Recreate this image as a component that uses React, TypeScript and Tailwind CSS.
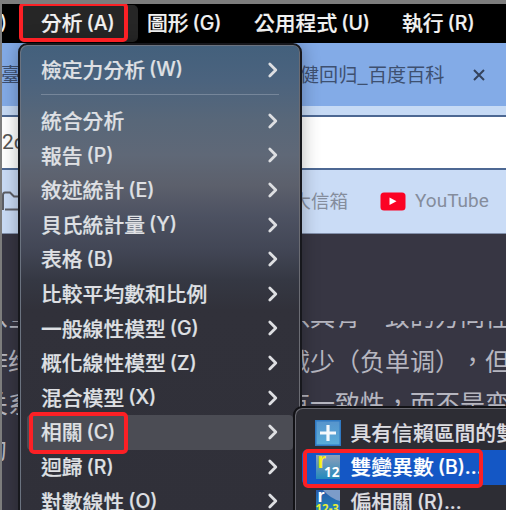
import React from "react";

const CJK = "font-['Noto_Sans_CJK_TC','Noto_Sans_CJK_SC',sans-serif]";
const LATIN = "font-['Inter','Noto_Sans_CJK_TC',sans-serif]";

function Label({ text, hint }: { text: string; hint?: string }) {
  return (
    <span
      className={`${CJK} flex shrink-0 items-center pb-[1px] whitespace-nowrap text-[20.8px] leading-[32.6px] font-medium [-webkit-text-stroke:0.2px_currentColor]`}
    >
      <span>{text}</span>
      {hint && <span className={`${LATIN} mt-[1px] ml-[4px] text-[19.5px]`}>{hint}</span>}
    </span>
  );
}

function Chevron() {
  return (
    <svg width="12" height="18" viewBox="0 0 12 18" fill="none" className="shrink-0">
      <path d="M2.8 3 L8.8 9 L2.8 15" stroke="#dedfe2" strokeWidth="2.8" strokeLinecap="round" strokeLinejoin="round" />
    </svg>
  );
}

const items: { text: string; hint?: string; active?: boolean }[] = [
  { text: "統合分析" },
  { text: "報告", hint: "(P)" },
  { text: "敘述統計", hint: "(E)" },
  { text: "貝氏統計量", hint: "(Y)" },
  { text: "表格", hint: "(B)" },
  { text: "比較平均數和比例" },
  { text: "一般線性模型", hint: "(G)" },
  { text: "概化線性模型", hint: "(Z)" },
  { text: "混合模型", hint: "(X)" },
  { text: "相關", hint: "(C)", active: true },
  { text: "迴歸", hint: "(R)" },
  { text: "對數線性", hint: "(O)" },
];

function MenuRow({ text, hint, active }: { text: string; hint?: string; active?: boolean }) {
  return (
    <div
      className={`mx-[7px] flex h-[34.6px] shrink-0 items-center justify-between rounded-[4px] pr-[14.5px] pl-[14px] ${active ? "bg-[#4b4c54]" : ""}`}
    >
      <Label text={text} hint={hint} />
      <Chevron />
    </div>
  );
}

function MenuBar() {
  return (
    <header className="flex h-[39px] shrink-0 items-center bg-black pb-[1px] text-[#f2f2f2]">
      <div className={`${LATIN} -ml-[2px] w-[19px] text-[19.5px] font-medium`}>)</div>
      <div className="flex h-[37px] w-[119px] items-center rounded-[5px] bg-[#262626] pl-[22px]">
        <Label text="分析" hint="(A)" />
      </div>
      <div className="w-[107px] pl-[9px]">
        <Label text="圖形" hint="(G)" />
      </div>
      <div className="w-[147px] pl-[9px]">
        <Label text="公用程式" hint="(U)" />
      </div>
      <div className="pl-[10px]">
        <Label text="執行" hint="(R)" />
      </div>
    </header>
  );
}

function Browser() {
  return (
    <>
      <div className={`${CJK} flex h-[63px] shrink-0 items-center bg-[#83abe7] text-[19px] text-[#3e5070]`}>
        <span className="-ml-[1px] w-[299px] overflow-hidden whitespace-nowrap">臺</span>
        <span className="w-[146px] whitespace-nowrap text-[19.1px]">健回归_百度百科</span>
        <svg width="14" height="14" viewBox="0 0 14 14" className="ml-[26px]">
          <path d="M2 2 L12 12 M12 2 L2 12" stroke="#34425c" strokeWidth="2" />
        </svg>
      </div>
      <div className="h-[9px] shrink-0 bg-[#c6daf5]" />
      <div className="flex h-[55px] shrink-0 items-center border-y-2 border-[#4d6893] bg-white font-['Roboto',sans-serif] text-[21px] text-[#555]">
        2d
      </div>
      <div className={`${CJK} flex h-[64px] shrink-0 items-center border-b border-[#8290ab] bg-[#cadcf6] pb-[1px] text-[18.5px] text-[#858d9c]`}>
        <svg width="24" height="22" viewBox="0 0 24 22" fill="none" className="-ml-[1px] shrink-0">
          <path d="M2 20 V5 Q2 2.5 4 2.5 H9 L13 6.5 H22 V19.5 H4" stroke="#5d5f66" strokeWidth="2" />
        </svg>
        <span className="ml-[267.5px] shrink-0 whitespace-nowrap">大信箱</span>
        <svg width="26" height="19" viewBox="0 0 26 19" className="ml-[32px] shrink-0">
          <rect x="0.5" y="0.5" width="25" height="18" rx="3.5" fill="#fb0324" />
          <path d="M9.5 5.5 L16.5 9.3 L9.5 13 Z" fill="#fff" />
        </svg>
        <span className="ml-[9px] font-['Roboto',sans-serif] text-[19px]">YouTube</span>
      </div>
    </>
  );
}

function Article() {
  const row = "flex h-[42px] shrink-0 items-center whitespace-nowrap";
  return (
    <div
      className={`${CJK} flex flex-1 flex-col overflow-hidden bg-[#373643] pt-[87px] text-[25px] text-[#b6b6c0] [text-spacing-trim:space-all]`}
    >
      <div className="mb-[10px] flex h-[9px] shrink-0 items-end overflow-hidden whitespace-nowrap leading-[30px]">
        <span className="-ml-[19px] w-[302px] shrink-0">从全</span>
        <span className="shrink-0">以具有一致的方向性</span>
      </div>
      <div className={row}>
        <span className="-ml-[19px] w-[302px] shrink-0">作给</span>
        <span className="shrink-0">减少（负单调），但</span>
      </div>
      <div className={row}>
        <span className="-ml-[19px] w-[302px] shrink-0">关系</span>
        <span className="shrink-0">有一致性，而不是变</span>
      </div>
      <div className={`${row} pt-[8px]`}>
        <span className="-ml-[20px]">的</span>
      </div>
    </div>
  );
}

function PlusIcon() {
  return (
    <svg width="26" height="26" viewBox="0 0 26 26" className="shrink-0">
      <defs>
        <linearGradient id="plus" x1="0" y1="0" x2="0" y2="1">
          <stop offset="0" stopColor="#5794cc" />
          <stop offset="1" stopColor="#59aeda" />
        </linearGradient>
      </defs>
      <rect x="0.75" y="0.75" width="24.5" height="24.5" fill="url(#plus)" stroke="#2f79c2" strokeWidth="1.5" />
      <path d="M13 5 V21 M5 13 H21" stroke="#f3f8fc" strokeWidth="3.2" />
    </svg>
  );
}

function CorrelationIcon({ partial }: { partial?: boolean }) {
  return (
    <svg width="26" height="24" viewBox="0 0 26 24" className="shrink-0">
      <defs>
        <linearGradient id={partial ? "cp" : "cb"} x1="0" y1="0" x2="0" y2="1">
          <stop offset="0" stopColor={partial ? "#285aa9" : "#8d9eb9"} />
          <stop offset="1" stopColor="#238abd" />
        </linearGradient>
      </defs>
      <rect x="1" y="0" width="24" height="24" fill={partial ? "url(#cp)" : "url(#cb)"} />
      {partial && <path d="M8 0 H25 V11 Q16 9 8 0" fill="#7c9cc9" />}
      <text x="2.5" y={partial ? 11.5 : 13} fontFamily="Liberation Sans" fontWeight="700" fontSize={partial ? 18 : 22} fill={partial ? "#fff" : "#f6ef16"}>r</text>
      <text x={partial ? 0.5 : 9} y={partial ? 22.5 : 22} fontFamily="Noto Sans" fontWeight="700" fontSize={partial ? 11.5 : 13.5} fill={partial ? "#e9ef36" : "#fff"}>
        {partial ? "12-3" : "12"}
      </text>
    </svg>
  );
}

function Submenu() {
  const row = "flex h-[34.6px] shrink-0 items-center gap-[9.5px] pl-[13px]";
  return (
    <div className="absolute top-[402px] left-[291px] flex h-[130px] w-[240px] flex-col rounded-tl-[9px] border-2 border-[#121216] bg-[#2d2d34] pt-[7.4px] pl-[7px] text-[#dddde1] shadow-[inset_1px_1px_0_#65656d]">
      <div className={row}>
        <PlusIcon />
        <Label text="具有信賴區間的雙變異數" />
      </div>
      <div className={`${row} rounded-l-[5px] bg-[#1457c5] text-white`}>
        <CorrelationIcon />
        <Label text="雙變異數" hint="(B)..." />
      </div>
      <div className={row}>
        <CorrelationIcon partial />
        <Label text="偏相關" hint="(R)..." />
      </div>
    </div>
  );
}

export default function App() {
  return (
    <div className="relative flex h-[510px] w-[506px] flex-col overflow-hidden border-t-4 border-l-2 border-[#7d7d7d] bg-[#373643]">
      <MenuBar />
      <Browser />
      <Article />

      <nav className="absolute top-[39px] left-[16px] flex h-[490px] w-[284px] flex-col rounded-t-[9px] border-2 border-[#17181d] bg-[linear-gradient(180deg,#43607c_0px,#4b637e_35px,#586779_75px,#5f6877_110px,#5c606c_140px,#4d5262_170px,#424655_205px,#353843_235px,#31313a_265px,#303039_100%)] pt-[7.3px] text-[#dfe0e4] shadow-[inset_1px_1px_0_#6b7380,inset_-1px_0_0_#6b6c73,0_0_18px_rgba(0,0,0,0.3)]">
        <MenuRow text="檢定力分析" hint="(W)" />
        <div className="mt-[6.7px] mr-[21px] mb-[8.5px] ml-[21px] h-[1.5px] shrink-0 bg-[#76869a]" />
        {items.map((item) => (
          <MenuRow key={item.text} {...item} />
        ))}
      </nav>

      <Submenu />

      <div className="absolute -top-[2.5px] left-[17px] h-[40px] w-[108.5px] rounded-[5px] border-[4.5px] border-[#fc2025]" />
      <div className="absolute top-[407.5px] left-[27px] h-[42.5px] w-[99px] rounded-[5px] border-[4.5px] border-[#fc2025]" />
      <div className="absolute top-[445px] left-[301px] h-[38.5px] w-[180px] rounded-[5px] border-[4.5px] border-[#fc2025]" />
    </div>
  );
}
